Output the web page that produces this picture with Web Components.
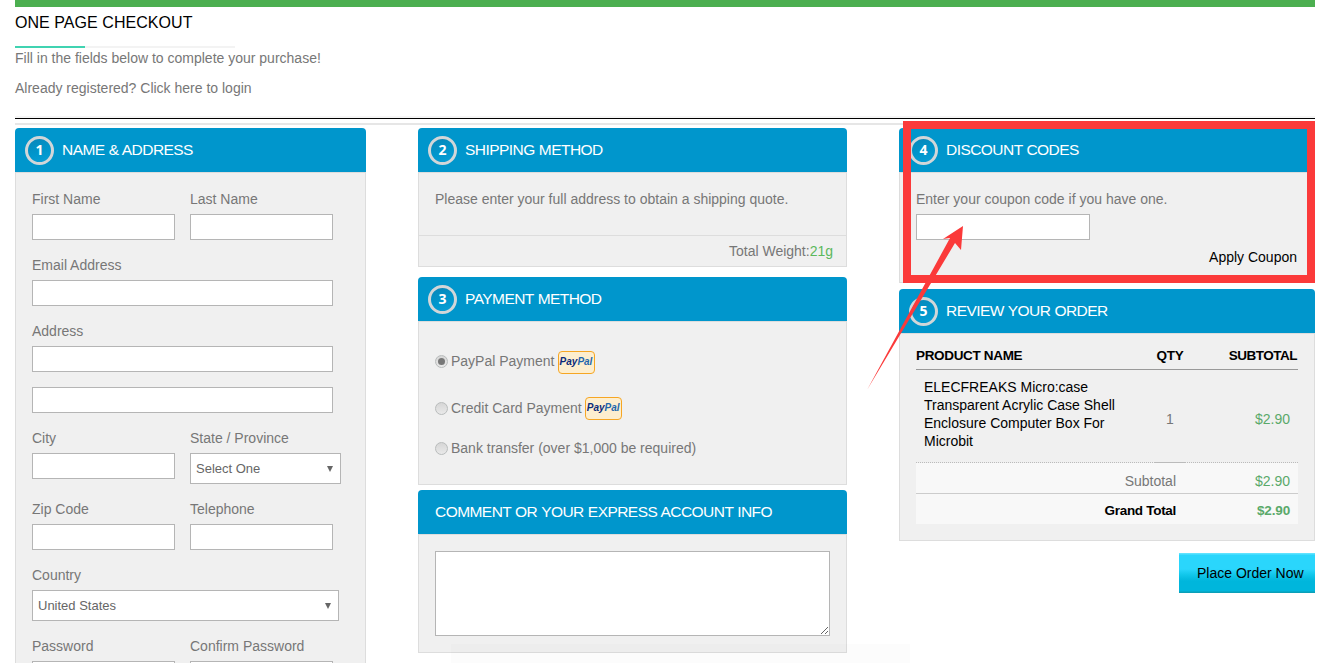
<!DOCTYPE html>
<html lang="en"><head><meta charset="utf-8"><title>One Page Checkout</title>
<style>
html,body{margin:0;padding:0;height:663px;overflow:hidden;background:#fff}
body{font:14px/20px "Liberation Sans",Arial,sans-serif;color:#777}
</style></head><body>
<checkout-page>
  <page-intro slot="intro"></page-intro>

  <check-panel slot="col1" step="1" heading="NAME &amp; ADDRESS">
    <form-grid>
      <form-field label="First Name"><text-box></text-box></form-field>
      <form-field label="Last Name"><text-box></text-box></form-field>
      <form-field wide label="Email Address"><text-box w="301"></text-box></form-field>
      <form-field wide label="Address"><text-box w="301"></text-box><text-box w="301" style="margin-top:15px"></text-box></form-field>
      <form-field label="City"><text-box></text-box></form-field>
      <form-field label="State / Province"><pick-box w="151" value="Select One" pad="6"></pick-box></form-field>
      <form-field label="Zip Code"><text-box></text-box></form-field>
      <form-field label="Telephone"><text-box></text-box></form-field>
      <form-field wide label="Country"><pick-box w="307" value="United States" pad="6"></pick-box></form-field>
      <form-field label="Password"><text-box></text-box></form-field>
      <form-field label="Confirm Password"><text-box></text-box></form-field>
    </form-grid>
  </check-panel>

  <shipping-panel slot="col2"></shipping-panel>
  <check-panel slot="col2" step="3" heading="PAYMENT METHOD" style="margin-top:10px">
    <payment-list></payment-list>
  </check-panel>
  <check-panel slot="col2" heading="COMMENT OR YOUR EXPRESS ACCOUNT INFO" style="margin-top:5px">
    <comment-box></comment-box>
  </check-panel>

  <check-panel slot="col3" step="4" heading="DISCOUNT CODES">
    <coupon-form></coupon-form>
  </check-panel>
  <check-panel slot="col3" step="5" heading="REVIEW YOUR ORDER" style="margin-top:6px">
    <order-table></order-table>
  </check-panel>
  <place-button slot="col3">Place Order Now</place-button>

  <red-annotation slot="over"></red-annotation>
</checkout-page>

<script>
const def=(name,html,extra={})=>{
  const t=document.createElement('template');t.innerHTML=html;
  customElements.define(name,class extends HTMLElement{
    constructor(){super();this.attachShadow({mode:'open'}).appendChild(t.content.cloneNode(true));}
    connectedCallback(){extra.init&&extra.init(this,this.shadowRoot);}
  });
};

def('checkout-page',`<style>
:host{display:block;position:relative;width:1335px;height:663px;overflow:hidden;box-sizing:border-box;padding:0 20px 0 15px}
.bar{height:7px;background:#4caf50}
.cols{display:grid;grid-template-columns:351px 429px 416px;column-gap:52px;align-items:start;margin-top:3px}
.col{display:flex;flex-direction:column;min-width:0}
</style>
<div class="bar"></div><slot name="intro"></slot>
<div class="cols"><div class="col"><slot name="col1"></slot></div><div class="col"><slot name="col2"></slot></div><div class="col"><slot name="col3"></slot></div></div>
<slot name="over"></slot>`);

def('page-intro',`<style>
:host{display:block}
h1{margin:0;padding-top:7px;font:400 16px/18px "Liberation Sans",Arial,sans-serif;letter-spacing:.05px;color:#000;height:32px;box-sizing:content-box}
.u{width:220px;height:2px;background:#f3f3f3}.u i{display:block;width:70px;height:2px;background:#40d3b1}
p{margin:0;color:#777}p+p{margin-top:10px}
.rule{margin-top:18px;height:2px;background:#f5f5f5}
.k{height:1px;background:#000}.g{margin-top:4px;height:2px;background:#e6e6e6}
</style>
<h1>ONE PAGE CHECKOUT</h1><div class="u"><i></i></div>
<p>Fill in the fields below to complete your purchase!</p><p>Already registered? Click here to login</p>
<div class="rule"></div><div class="k"></div><div class="g"></div>`);

const headCss=`.head{height:44px;box-sizing:border-box;background:#0096cc;border-radius:4px 4px 0 0;display:flex;align-items:center;gap:8px;padding-left:10px;color:#fff;font-size:15.5px;letter-spacing:-.55px;word-spacing:.4px;white-space:nowrap}
.head.plain{padding-left:17px}
.num{width:29px;height:29px;box-sizing:border-box;border:3px solid #d2d6d8;border-radius:50%;display:flex;align-items:center;justify-content:center;letter-spacing:0;font:700 14px/1 "Open Sans","Liberation Sans",sans-serif;background:linear-gradient(160deg,#0a86b8 0%,#0096cc 55%,#0a9fd6 100%)}`;

def('check-panel',`<style>
:host{display:block}
${headCss}
.body{background:#f0f0f0;border:1px solid #ddd;padding:16px}
</style>
<div class="head"><span class="num"></span><span class="t"></span></div><div class="body"><slot></slot></div>`,{init(h,s){
  s.querySelector('.t').textContent=h.getAttribute('heading');
  const n=s.querySelector('.num');
  if(h.hasAttribute('step'))n.textContent=h.getAttribute('step');else{n.remove();s.querySelector('.head').classList.add('plain');}
}});

def('form-grid',`<style>:host{display:grid;grid-template-columns:143px 143px;column-gap:15px;row-gap:15px;align-items:start;padding-bottom:60px}</style><slot></slot>`);
def('form-field',`<style>:host{display:block;min-width:0;white-space:nowrap}:host([wide]){grid-column:1 / -1}
.l{display:block;height:20px;margin-bottom:5px;color:#777}</style><span class="l"></span><slot></slot>`,{init(h,s){s.querySelector('.l').textContent=h.getAttribute('label');}});
def('text-box',`<style>:host{display:block}input{display:block;box-sizing:border-box;width:var(--w,143px);height:26px;border:1px solid #b5b5b5;background:#fff;margin:0;padding:0 5px;border-radius:0;outline:0}</style><input type="text">`,{init(h,s){if(h.getAttribute('w'))s.querySelector('input').style.setProperty('--w',h.getAttribute('w')+'px');}});
def('pick-box',`<style>:host{display:block;position:relative}
.b{box-sizing:border-box;height:31px;border:1px solid #b5b5b5;background:#fff;display:flex;align-items:center;font-size:13px;color:#666;white-space:nowrap}
.a{margin-left:auto;margin-right:7px;width:0;height:0;border-left:3px solid transparent;border-right:3px solid transparent;border-top:6px solid #666}
</style><div class="b"><span class="v"></span><span class="a"></span></div>`,{init(h,s){const b=s.querySelector('.b');b.style.width=h.getAttribute('w')+'px';b.style.paddingLeft=(+h.getAttribute('pad')-1+0)+'px';s.querySelector('.v').textContent=h.getAttribute('value');}});

def('shipping-panel',`<style>:host{display:block}
${headCss}
.body{background:#f0f0f0;border:1px solid #ddd}
.m{padding:16px 16px 26px;height:20px;box-sizing:content-box;color:#777}
.f{border-top:1px solid #ddd;height:31px;box-sizing:border-box;padding:5px 13px 0;text-align:right;color:#777}
b{font-weight:400;color:#5cb85c}
</style><div class="head"><span class="num">2</span><span>SHIPPING METHOD</span></div>
<div class="body"><div class="m">Please enter your full address to obtain a shipping quote.</div><div class="f">Total Weight:<b>21g</b></div></div>`);

def('pay-badge',`<style>:host{display:inline-flex;flex:none;box-sizing:border-box;width:37px;height:23px;border:1.5px solid #f6a623;border-radius:4px;background:#fdeecf;align-items:center;justify-content:center;overflow:hidden;font:italic 700 10px/1 "Liberation Sans",Arial,sans-serif;padding-bottom:1px}
.a{color:#0b2a7a}.b{color:#1f66ad}</style><span class="a">Pay</span><span class="b">Pal</span>`);
def('pay-radio',`<style>:host{display:flex;align-items:flex-start;white-space:pre;color:#777}
.r{flex:none;width:13px;height:13px;box-sizing:border-box;border:1px solid #b9bcbc;border-radius:50%;background:linear-gradient(#d6d6d6,#e9e9e9);display:flex;align-items:center;justify-content:center;margin:4px 3px 0 0}
:host([on]) .r::after{content:"";width:7px;height:7px;border-radius:50%;background:#777}
::slotted(pay-badge){margin-left:3px}
</style><span class="r"></span><slot></slot>`);
def('payment-list',`<style>:host{display:flex;flex-direction:column;padding:13px 0 10px}</style><slot></slot>`,{init(h){
  if(h.children.length)return;
  h.innerHTML=`<pay-radio on style="height:23px">PayPal Payment<pay-badge></pay-badge></pay-radio><pay-radio style="height:23px;margin-top:24px">Credit Card Payment<pay-badge style="margin-top:-1px"></pay-badge></pay-radio><pay-radio style="height:20px;margin-top:17px">Bank transfer (over $1,000 be required)</pay-radio>`;
}});
def('comment-box',`<style>:host{display:block}textarea{display:block;box-sizing:border-box;width:395px;height:85px;border:1px solid #b5b5b5;background:#fff;margin:0;padding:4px;border-radius:0;outline:0;resize:both}</style><textarea></textarea>`);

def('coupon-form',`<style>:host{display:block;color:#777}
.p{height:20px}
input{display:block;box-sizing:border-box;width:174px;height:26px;border:1px solid #b5b5b5;background:#fff;margin:5px 0 0;padding:0 5px;outline:0;border-radius:0}
.a{text-align:right;color:#000;margin:7px 1px -1px 0}
</style><div class="p">Enter your coupon code if you have one.</div><input type="text"><div class="a">Apply Coupon</div>`);

def('order-table',`<style>:host{display:grid;grid-template-columns:239px 30px 113px;margin-top:-4px}
.h{height:23px;line-height:20px;font-size:13.5px;font-weight:700;letter-spacing:-.33px;color:#000;border-bottom:1px solid #999;white-space:nowrap}
.qh{text-align:center}.sh{text-align:right;padding-right:1px;letter-spacing:-.5px}
.pn{color:#000;line-height:18px;padding:8px 8px 12px;border-bottom:1px dotted #bbb}
.q,.pr{display:flex;align-items:center;padding-top:6px;box-sizing:border-box;border-bottom:1px dotted #bbb}
.q{justify-content:center;border-bottom:1px solid #bbb}
.pr{justify-content:flex-end;padding-right:8px;color:#5aa96a}
.tl{grid-column:1 / 3;background:#f8f8f8;text-align:right;padding-right:9px}
.tv{background:#f8f8f8;text-align:right;padding-right:8px;color:#5aa96a}
.a{padding-top:8px;height:22px;border-bottom:1px solid #ccc}
.c{padding-top:7px;height:23px}
.c.tl{font-weight:700;color:#000;font-size:13.5px;letter-spacing:-.3px}.c.tv{font-weight:700;font-size:13.5px;letter-spacing:-.15px}
</style>
<div class="h">PRODUCT NAME</div><div class="h qh">QTY</div><div class="h sh">SUBTOTAL</div>
<div class="pn">ELECFREAKS Micro:case Transparent Acrylic Case Shell Enclosure Computer Box For Microbit</div><div class="q">1</div><div class="pr">$2.90</div>
<div class="a tl">Subtotal</div><div class="a tv">$2.90</div>
<div class="c tl">Grand Total</div><div class="c tv">$2.90</div>`);

def('place-button',`<style>:host{display:block;align-self:flex-end;margin-top:12px}
button{display:block;box-sizing:border-box;width:136px;height:40px;border:0;margin:0;padding:0 0 0 18px;text-align:left;color:#000;font:14px/20px "Liberation Sans",Arial,sans-serif;
background:linear-gradient(#5fe3ff 0,#5fe3ff 1px,#2ad6fc 2px,#2ad6fc 16px,#10c6ea 22px,#00b6dc 28px,#00b6dc 38px,#0a9fb8 39px,#0a9fb8 40px)}
</style><button><slot></slot></button>`);

def('red-annotation',`<style>:host{position:absolute;left:0;top:0;width:1335px;height:663px;pointer-events:none}
.box{position:absolute;left:903px;top:121px;width:412px;height:162px;box-sizing:border-box;border:8px solid #fb3a3a}
svg{position:absolute;left:0;top:0}
.ghost{position:absolute;left:451px;top:644px;width:459px;height:19px;background:rgba(0,0,0,.012)}
</style><div class="box"></div>
<svg width="1335" height="663" viewBox="0 0 1335 663"><polygon fill="#fb3a3a" points="867,390 950,238 943,239 963,226 961,250 955,243"/></svg>
<div class="ghost"></div>`);
</script>
</body></html>
